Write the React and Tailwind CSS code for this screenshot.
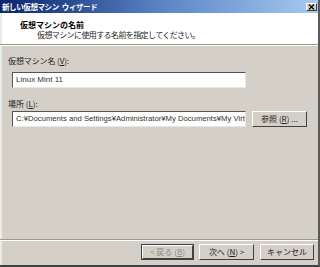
import React from "react";

const jp = { fontFamily: '"Noto Sans CJK JP", "Liberation Sans", sans-serif' };
const lat = { fontFamily: '"Liberation Sans", "Noto Sans CJK JP", sans-serif' };

function Btn({ w, children, disabled, def }) {
  return (
    <div
      className={`h-[16px] ${w} ${def ? "border border-[#404040]" : ""} box-border`}
    >
      <div className="h-full w-full border-t border-l border-t-white border-l-white border-b border-r border-b-[#404040] border-r-[#404040] bg-[#d4d0c8] flex items-center justify-center box-border">
        <span
          className={`text-[8px] leading-none whitespace-nowrap ${disabled ? "text-[#8a8880]" : "text-[#222]"}`}
          style={jp}
        >
          {children}
        </span>
      </div>
    </div>
  );
}

export default function App() {
  return (
    <div className="w-[320px] h-[267px] bg-[#d4d0c8] flex flex-col overflow-hidden border-r-2 border-r-[#5a5a5a] border-b-2 border-b-[#404040] box-border relative">
      {/* Title bar */}
      <div className="h-[13px] flex items-center justify-between bg-gradient-to-r from-[#0a246a] via-[#5a83c4] to-[#a6caf0] pl-[2px] pr-[1px] shrink-0">
        <span className="text-white font-bold text-[7.5px] leading-none tracking-[-0.4px] flex" style={jp}>
          <span>新しい仮想マシン</span>
          <span className="ml-[3px]">ウィザード</span>
        </span>
        <div className="w-[11px] h-[8px] bg-[#d4d0c8] border-t border-l border-t-white border-l-white border-b border-r border-b-[#404040] border-r-[#404040] flex items-center justify-center box-border">
          <svg width="7" height="6" viewBox="0 0 7 6">
            <path d="M1 0.5 L6 5.5 M6 0.5 L1 5.5" stroke="#000" strokeWidth="1.2" />
          </svg>
        </div>
      </div>
      {/* Header */}
      <div className="h-[31px] bg-white shrink-0 border-l-2 border-l-[#ecebe6] pl-[18px] pt-[7px] flex flex-col">
        <span className="text-[8px] font-bold leading-[10px] text-black" style={jp}>
          仮想マシンの名前
        </span>
        <span className="text-[8px] leading-[10px] text-[#222] ml-[17px] tracking-[-0.6px]" style={jp}>
          仮想マシンに使用する名前を指定してください。
        </span>
      </div>
      <div className="h-[1px] bg-[#9a988f] shrink-0" />
      <div className="h-[1px] bg-white shrink-0" />
      {/* Body */}
      <div className="flex-1 border-l-2 border-l-[#ecebe6] pl-[6px] pt-[10px] flex flex-col">
        <span className="text-[8px] leading-[10px] text-[#222] tracking-[-0.1px]" style={jp}>
          仮想マシン名 (<span className="underline">V</span>):
        </span>
        <div className="mt-[6px] ml-[4px] w-[234px] h-[16px] bg-white border-t border-l border-t-[#555] border-l-[#555] border-b border-r border-b-[#e8e6e0] border-r-[#e8e6e0] box-border flex items-center pl-[3px]">
          <span className="text-[8px] leading-none text-[#333]" style={lat}>Linux Mint 11</span>
        </div>
        <span className="mt-[11px] text-[8px] leading-[10px] text-[#222]" style={jp}>
          場所 (<span className="underline">L</span>):
        </span>
        <div className="mt-[2px] ml-[4px] flex items-center gap-[6px]">
          <div className="w-[234px] h-[16px] bg-white border-t border-l border-t-[#555] border-l-[#555] border-b border-r border-b-[#e8e6e0] border-r-[#e8e6e0] box-border flex items-center pl-[3px] overflow-hidden">
            <span className="text-[7.7px] leading-none text-[#333] whitespace-nowrap" style={lat}>
              C:¥Documents and Settings¥Administrator¥My Documents¥My Virtual Machines¥Linux Mint 11
            </span>
          </div>
          <Btn w="w-[55px]">参照 (<span className="underline">R</span>) ...</Btn>
        </div>
      </div>
      {/* Bottom separator */}
      <div className="h-[1px] bg-[#9a988f] shrink-0" />
      <div className="h-[1px] bg-white shrink-0" />
      <div className="h-[24px] shrink-0 border-l-2 border-l-[#ecebe6] flex items-start justify-end pt-[3px] pr-[4px]">
        <Btn w="w-[53px]" disabled def>&lt; 戻る (<span className="underline">B</span>)</Btn>
        <div className="w-[5px]" />
        <Btn w="w-[55px]">次へ (<span className="underline">N</span>) &gt;</Btn>
        <div className="w-[6px]" />
        <Btn w="w-[54px]">キャンセル</Btn>
      </div>
    </div>
  );
}
